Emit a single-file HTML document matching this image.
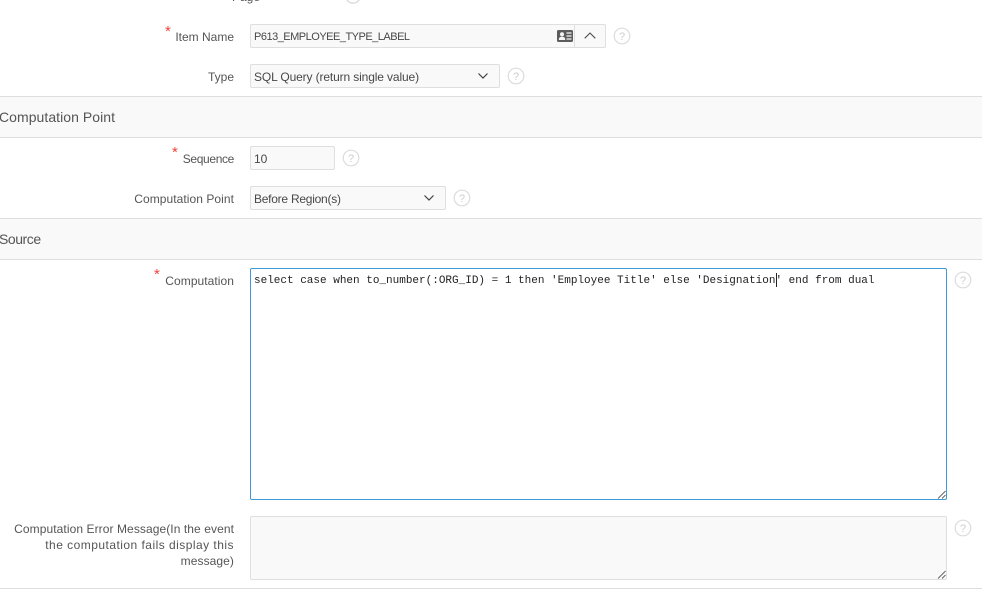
<!DOCTYPE html>
<html><head><meta charset="utf-8">
<style>
html,body{margin:0;padding:0;background:#fff;width:984px;height:589px;overflow:hidden}
body{position:relative;font-family:"Liberation Sans",sans-serif;font-size:12px;color:#404040}
.a{position:absolute;white-space:nowrap}
.l{position:absolute;right:750px;white-space:nowrap;color:#555;font-size:12px;line-height:16px}
.star{position:absolute;color:#f0443c;font-size:15px;line-height:15px}
.f{position:absolute;box-sizing:border-box;background:#f9f9f9;border:1px solid #dfdfdf;border-radius:2px;line-height:24px;padding-left:3px;color:#484848;white-space:nowrap}
.h{position:absolute;left:0;width:982px;box-sizing:border-box;background:#f9f9f9;border-top:1px solid #dedede;border-bottom:1px solid #dedede;font-size:14px;color:#555}
.h span{position:absolute;top:11px;line-height:18px}
svg{position:absolute;overflow:visible}
</style></head><body>
<svg style="left:345px;top:-12px" width="16" height="16" viewBox="0 0 16 16"><circle cx="8" cy="8" r="7.2" fill="none" stroke="#d8d8d8" stroke-width="1.3"/></svg>
<div class="a" style="left:232px;top:-11px;color:#555;line-height:16px">Page</div>

<div class="star" style="left:165px;top:24px">*</div>
<div class="l" style="top:29px">Item Name</div>
<div class="f" style="left:250px;top:24px;width:356px;height:24px;font-size:11px;letter-spacing:-.5px">P613_EMPLOYEE_TYPE_LABEL</div>
<div class="a" style="left:574px;top:25px;width:1px;height:22px;background:#dfdfdf"></div>
<svg style="left:557px;top:30px" width="16" height="12" viewBox="0 0 16 12"><rect x="0" y="0" width="16" height="12" rx="1.5" fill="#5c5c5c"/><circle cx="5" cy="4.2" r="2" fill="#f4f4f4"/><path d="M1.8 10c0-2.4 1.2-3.4 3.2-3.4S8.200 7.600 8.200 10z" fill="#f4f4f4"/><path d="M9.500 3h5M9.500 6h5M9.500 9h5" stroke="#f4f4f4" stroke-width="1.200"/></svg>
<svg style="left:584px;top:32px" width="12" height="7" viewBox="0 0 12 7"><path d="M.7 6.300 6 1l5.300 5.300" fill="none" stroke="#505050" stroke-width="1.100"/></svg>
<svg style="left:613px;top:27px" width="18" height="18" viewBox="0 0 18 18"><circle cx="9" cy="9" r="7.800" fill="#fff" stroke="#dcdcdc" stroke-width="1.200"/><text x="9" y="13" text-anchor="middle" font-family="Liberation Sans" font-size="11" fill="#cdcdcd">?</text></svg>

<div class="l" style="top:69px">Type</div>
<div class="f" style="left:250px;top:64px;width:250px;height:24px;letter-spacing:-.13px">SQL Query (return single value)</div>
<svg style="left:478px;top:73px" width="10" height="6" viewBox="0 0 10 6"><path d="M.5.500 5 5 9.500.500" fill="none" stroke="#404040" stroke-width="1.200"/></svg>
<svg style="left:507px;top:67px" width="18" height="18" viewBox="0 0 18 18"><circle cx="9" cy="9" r="7.800" fill="#fff" stroke="#dcdcdc" stroke-width="1.200"/><text x="9" y="13" text-anchor="middle" font-family="Liberation Sans" font-size="11" fill="#cdcdcd">?</text></svg>

<div class="h" style="top:96px;height:42px"><span style="left:-1px;letter-spacing:.05px">Computation Point</span></div>

<div class="star" style="left:172px;top:145px">*</div>
<div class="l" style="top:151px;letter-spacing:-.35px">Sequence</div>
<div class="f" style="left:250px;top:146px;width:85px;height:24px">10</div>
<svg style="left:342px;top:149px" width="18" height="18" viewBox="0 0 18 18"><circle cx="9" cy="9" r="7.800" fill="#fff" stroke="#dcdcdc" stroke-width="1.200"/><text x="9" y="13" text-anchor="middle" font-family="Liberation Sans" font-size="11" fill="#cdcdcd">?</text></svg>

<div class="l" style="top:191px;letter-spacing:.06px">Computation Point</div>
<div class="f" style="left:250px;top:186px;width:196px;height:24px;letter-spacing:-.25px">Before Region(s)</div>
<svg style="left:424px;top:195px" width="10" height="6" viewBox="0 0 10 6"><path d="M.5.500 5 5 9.500.500" fill="none" stroke="#404040" stroke-width="1.200"/></svg>
<svg style="left:453px;top:189px" width="18" height="18" viewBox="0 0 18 18"><circle cx="9" cy="9" r="7.800" fill="#fff" stroke="#dcdcdc" stroke-width="1.200"/><text x="9" y="13" text-anchor="middle" font-family="Liberation Sans" font-size="11" fill="#cdcdcd">?</text></svg>

<div class="h" style="top:218px;height:42px"><span style="left:-1px;letter-spacing:-.45px">Source</span></div>

<div class="star" style="left:154px;top:267px">*</div>
<div class="l" style="top:273px;letter-spacing:.06px">Computation</div>
<div class="a" style="left:250px;top:268px;width:697px;height:232px;box-sizing:border-box;border:1px solid #3f9bd6;border-radius:2px;background:#fff"></div>
<div class="a" style="left:254px;top:273px;font-family:'Liberation Mono',monospace;font-size:11px;line-height:16px;color:#222">select case when to_number(:ORG_ID) = 1 then 'Employee Title' else 'Designation' end from dual</div>
<div class="a" style="left:776px;top:273px;width:1px;height:14px;background:#222"></div>
<svg style="left:938px;top:491px" width="8" height="8" viewBox="0 0 8 8"><path d="M0 7.500 7.500 0M4 7.500 7.500 4" stroke="#666" stroke-width="1"/></svg>
<svg style="left:954px;top:271px" width="18" height="18" viewBox="0 0 18 18"><circle cx="9" cy="9" r="7.800" fill="#fff" stroke="#dcdcdc" stroke-width="1.200"/><text x="9" y="13" text-anchor="middle" font-family="Liberation Sans" font-size="11" fill="#cdcdcd">?</text></svg>

<div class="l" style="top:521px;text-align:right;letter-spacing:.08px">Computation Error Message(In the event<br><span style="letter-spacing:.47px">the computation fails display this</span><br>message)</div>
<div class="f" style="left:250px;top:516px;width:697px;height:64px"></div>
<svg style="left:938px;top:571px" width="8" height="8" viewBox="0 0 8 8"><path d="M0 7.500 7.500 0M4 7.500 7.500 4" stroke="#666" stroke-width="1"/></svg>
<svg style="left:954px;top:519px" width="18" height="18" viewBox="0 0 18 18"><circle cx="9" cy="9" r="7.800" fill="#fff" stroke="#dcdcdc" stroke-width="1.200"/><text x="9" y="13" text-anchor="middle" font-family="Liberation Sans" font-size="11" fill="#cdcdcd">?</text></svg>
<div class="a" style="left:0;top:588px;width:982px;height:1px;background:#dedede"></div>
</body></html>
